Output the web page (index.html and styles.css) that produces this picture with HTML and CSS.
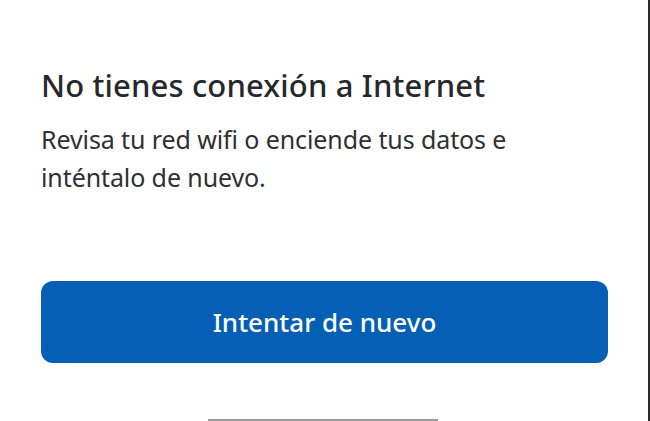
FILE: index.html
```html
<!DOCTYPE html>
<html lang="es">
  <head>
    <meta charset="UTF-8" />
    <meta name="viewport" content="width=device-width, initial-scale=1.0" />
    <title>Sin conexión</title>
    <link rel="stylesheet" href="styles.css">
  </head>
  <body>
    <div class="screen">
      <div class="message">
        <h1 class="title">No tienes conexión a Internet</h1>
        <p class="text">Revisa tu red wifi o enciende tus datos e inténtalo de nuevo.</p>
      </div>
      <button class="retry">Intentar de nuevo</button>
      <div class="home-bar"></div>
    </div>
  </body>
</html>
```

FILE: styles.css
```css
html,
body {
  margin: 0;
  padding: 0;
  background: #fff;
}
.screen {
  width: 650px;
  height: 421px;
  padding: 0 41px;
  box-sizing: border-box;
  border-right: 2px solid #2a2a2a;
  display: flex;
  flex-direction: column;
  font-family: "Noto Sans", sans-serif;
  overflow: hidden;
}
.message {
  padding-top: 65px;
}
.title {
  margin: 0;
  font-size: 31px;
  font-weight: 500;
  line-height: 40px;
  color: #26282b;
  letter-spacing: 0.15px;
}
.text {
  margin: 15px 0 0 0;
  width: 500px;
  font-size: 25px;
  line-height: 38px;
  color: #2f3033;
  letter-spacing: -0.1px;
}
.retry {
  margin-top: 85px;
  height: 82px;
  width: 567px;
  flex-shrink: 0;
  border: none;
  border-radius: 12px;
  background: #055fb4;
  color: #fff;
  font-family: "Noto Sans", sans-serif;
  font-size: 26px;
  font-weight: 500;
}
.home-bar {
  margin: auto auto 0 167px;
  width: 230px;
  height: 2px;
  background: #9a9a9a;
}
```
